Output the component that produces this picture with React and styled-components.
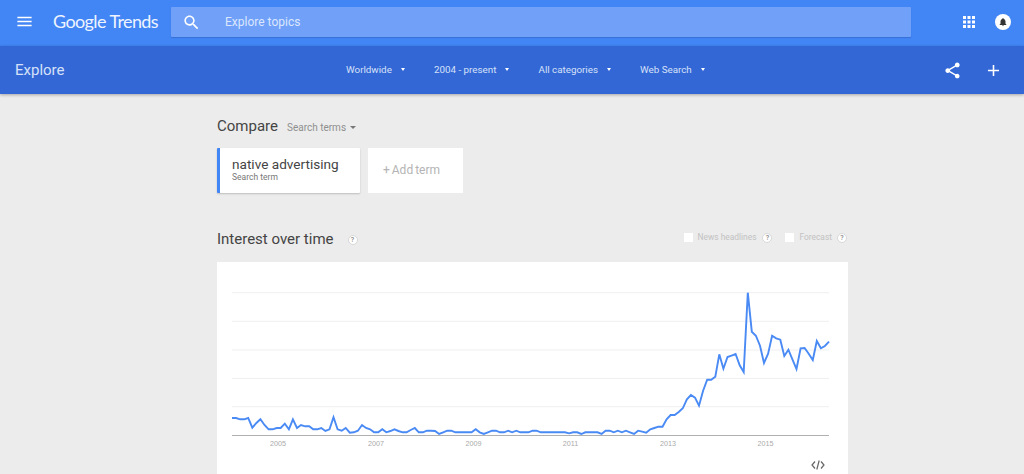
import React from "react"
import styled, { createGlobalStyle } from "styled-components"

const GlobalStyle = createGlobalStyle`
  html, body {
    margin: 0;
    background: #ececec;
    font-family: Roboto, "Liberation Sans", sans-serif;
    overflow: hidden;
  }
`

const TopBar = styled.header`
  display: flex;
  align-items: center;
  height: 46px;
  background: #4285f4;
  color: #fff;
`

const MenuButton = styled.div`
  display: flex;
  justify-content: center;
  width: 19px;
  margin: -3px 19px 0 15px;
`

const Logo = styled.div`
  width: 118px;
  margin-top: -5px;
  font-family: Lato, sans-serif;
  font-size: 18px;
  letter-spacing: -0.6px;
  white-space: nowrap;
  color: #eef4ff;
`

const SearchBar = styled.div`
  display: flex;
  align-items: center;
  box-sizing: border-box;
  width: 740px;
  height: 30px;
  margin-top: -2px;
  padding-left: 11px;
  background: #70a0f8;
  border-radius: 1px;
  box-shadow: 0 1px 1px rgba(30, 60, 140, 0.3);
  color: #fff;
`

const SearchText = styled.span`
  margin: -1px 0 0 24px;
  font-size: 12px;
  color: #dbe7fd;
`

const TopIcons = styled.div`
  display: flex;
  align-items: center;
  margin-left: 49px;
  margin-top: -3px;
`

const Avatar = styled.div`
  display: flex;
  align-items: center;
  justify-content: center;
  width: 16px;
  height: 16px;
  margin-left: 17px;
  border-radius: 50%;
  background: #fff;
  color: #333;
`

const SubBar = styled.div`
  display: flex;
  align-items: center;
  height: 48px;
  padding: 0 15px;
  background: #3367d6;
  box-shadow: 0 1px 3px rgba(0, 0, 0, 0.3);
  color: #fff;
  position: relative;
`

const PageTitle = styled.div`
  flex: 0 0 331px;
  font-size: 15px;
  color: #d6e1f8;
`

const Filters = styled.nav`
  display: flex;
  flex: 1;
  margin-top: -2px;
`

const Filter = styled.div`
  display: flex;
  align-items: center;
  width: ${(p) => p.$width}px;
  font-size: 9.8px;
  color: #d6e1f8;
`

const Caret = styled.span`
  width: 0;
  height: 0;
  margin-left: ${(p) => p.$gap || 9}px;
  border-left: ${(p) => p.$size || 2.5}px solid transparent;
  border-right: ${(p) => p.$size || 2.5}px solid transparent;
  border-top: ${(p) => p.$size || 3}px solid ${(p) => p.$color || "#fff"};
`

const SubActions = styled.div`
  display: flex;
  align-items: center;
  gap: 22px;
  margin-right: 6px;
`

const Main = styled.main`
  width: 631px;
  margin-left: 217px;
`

const CompareRow = styled.div`
  display: flex;
  align-items: center;
  height: 24px;
  margin-top: 20px;
`

const SectionTitle = styled.h2`
  margin: 0;
  font-size: 15px;
  font-weight: 400;
  color: #444;
`

const CompareMode = styled.span`
  display: flex;
  align-items: center;
  margin-left: 9px;
  margin-top: 2px;
  font-size: 10px;
  color: #8f8f8f;
`

const Terms = styled.div`
  display: flex;
  gap: 8px;
  margin-top: 10px;
`

const TermCard = styled.div`
  box-sizing: border-box;
  width: 143px;
  height: 45px;
  padding: 8px 0 0 12px;
  background: #fff;
  border-left: 3px solid #4285f4;
  border-radius: 1px;
  box-shadow: 0 1px 2px rgba(0, 0, 0, 0.2);
`

const TermName = styled.div`
  font-size: 13.6px;
  line-height: 16px;
  color: #444;
`

const TermType = styled.div`
  font-size: 8.5px;
  line-height: 10px;
  color: #777;
`

const AddTerm = styled.div`
  display: flex;
  align-items: center;
  box-sizing: border-box;
  width: 95px;
  height: 45px;
  padding: 0 0 1px 15px;
  background: #fff;
  font-size: 12px;
  word-spacing: -1px;
  color: #b4b4b4;
`

const InterestRow = styled.div`
  display: flex;
  align-items: center;
  height: 24px;
  margin-top: 34px;
`

const Help = styled.span`
  display: flex;
  align-items: center;
  justify-content: center;
  box-sizing: border-box;
  width: 10px;
  height: 10px;
  margin-left: ${(p) => p.$gap}px;
  margin-top: 1px;
  border-radius: 50%;
  background: #fff;
  border: 1px solid #d8d8d8;
  font-size: 7px;
  font-weight: 500;
  color: #888;
`

const Options = styled.div`
  display: flex;
  align-items: center;
  margin: -4px 1px 0 auto;
`

const Checkbox = styled.span`
  width: 9px;
  height: 9px;
  margin-left: ${(p) => p.$gap}px;
  margin-right: 5px;
  background: #fff;
`

const OptionLabel = styled.span`
  font-size: 8.4px;
  color: #c2c2c2;
`

const ChartCard = styled.section`
  position: relative;
  height: 212px;
  margin-top: 11px;
  background: #fff;
`

const EmbedIcon = styled.div`
  position: absolute;
  right: 23px;
  bottom: 4px;
  color: #666;
  line-height: 0;
`

const Icon = ({ d, size = 19 }) => (
  <svg width={size} height={size} viewBox="0 0 24 24" fill="currentColor">
    <path d={d} />
  </svg>
)

const ICONS = {
  menu: "M3 18h18v-2H3v2zm0-5h18v-2H3v2zm0-7v2h18V6H3z",
  search:
    "M15.5 14h-.79l-.28-.27C15.41 12.59 16 11.11 16 9.5 16 5.91 13.09 3 9.5 3S3 5.91 3 9.5 5.91 16 9.5 16c1.61 0 3.09-.59 4.23-1.57l.27.28v.79l5 4.99L20.49 19l-4.99-5zm-6 0C7.01 14 5 11.99 5 9.5S7.01 5 9.5 5 14 7.01 14 9.5 11.99 14 9.5 14z",
  apps: "M4 8h4V4H4v4zm6 12h4v-4h-4v4zm-6 0h4v-4H4v4zm0-6h4v-4H4v4zm6 0h4v-4h-4v4zm6-10v4h4V4h-4zm-6 4h4V4h-4v4zm6 6h4v-4h-4v4zm0 6h4v-4h-4v4z",
  bell: "M12 22c1.1 0 2-.9 2-2h-4c0 1.1.89 2 2 2zm6-6v-5c0-3.07-1.64-5.64-4.5-6.32V4c0-.83-.67-1.5-1.5-1.5s-1.5.67-1.5 1.5v.68C7.63 5.36 6 7.92 6 11v5l-2 2v1h16v-1l-2-2z",
  share:
    "M18 16.08c-.76 0-1.44.3-1.96.77L8.91 12.7c.05-.23.09-.46.09-.7s-.04-.47-.09-.7l7.05-4.11c.54.5 1.25.81 2.04.81 1.66 0 3-1.34 3-3s-1.34-3-3-3-3 1.34-3 3c0 .24.04.47.09.7L8.04 9.81C7.5 9.31 6.79 9 6 9c-1.66 0-3 1.34-3 3s1.34 3 3 3c.79 0 1.5-.31 2.04-.81l7.12 4.16c-.05.21-.08.43-.08.65 0 1.61 1.31 2.92 2.92 2.92 1.61 0 2.92-1.31 2.92-2.92s-1.31-2.92-2.92-2.92z",
  add: "M19 13h-6v6h-2v-6H5v-2h6V5h2v6h6v2z",
}

const FILTERS = [
  { label: "Worldwide", width: 88 },
  { label: "2004 - present", width: 104.5 },
  { label: "All categories", width: 101.5 },
  { label: "Web Search", width: 90 },
]

// monthly values, read off the reference in page pixels
const TREND = [
  418, 418, 419.3, 419.3, 418, 427.7, 423, 419.3, 425, 429.3, 429.3, 428, 428,
  423.7, 429.3, 419.3, 428, 425, 426.3, 426.3, 429.3, 429.3, 428, 431, 429.3,
  417.3, 429.3, 430.7, 428, 432.7, 432.3, 430.7, 425, 428, 429.3, 432.3, 432.3,
  429.3, 432.3, 431, 429.3, 431, 432.3, 432.3, 430, 428, 432.3, 432.3, 430.7,
  430.7, 431, 434,
  432.3, 430.7, 430.7, 432.3, 432.3, 432.3, 432.3, 432.3, 429.3, 432.3, 434,
  432.3, 430.7, 430.7, 432.3, 432.3, 430.7, 432.3, 430.7, 432.3, 432.3, 432.3,
  430.7, 430.7, 432.3, 432.3, 432.3, 432.3, 432.3, 432.3, 432.3, 433.3, 432.3,
  432.3, 434, 432.3, 432.3, 432.3, 432.3, 434, 430.7, 430.7, 432.3, 430.7,
  432.3, 430.7, 432.3, 434, 430.7,
  431.7, 432.7, 429.3, 428, 426.7, 426.7, 419.3, 415, 415, 412, 408.3, 399.3,
  395, 397.7, 405.7, 390.7, 379.7, 379.7, 376.7, 354.3, 368.7, 357, 355.7, 354,
  365.3, 372, 292.7, 331.7, 335.7, 345.7, 363, 353.7, 335.7, 338.3, 339.7, 356,
  349.7, 359.3, 369, 348.3, 348, 353.7, 360, 341, 348.3, 346, 341.7,
]

const CHART_LEFT = 232
const CHART_RIGHT = 829
const GRID = [292.7, 321.3, 350, 378.4, 406.7]
const YEARS = [
  ["2005", 278],
  ["2007", 376],
  ["2009", 473.5],
  ["2011", 570.5],
  ["2013", 668],
  ["2015", 765.5],
]

function TrendChart() {
  const step = (CHART_RIGHT - CHART_LEFT) / (TREND.length - 1)
  const points = TREND.map((y, i) => `${(CHART_LEFT + i * step).toFixed(1)},${y}`).join(" ")

  return (
    <svg width="631" height="190" viewBox="217 262 631 190" style={{ display: "block" }}>
      {GRID.map((y) => (
        <line key={y} x1={CHART_LEFT} x2={CHART_RIGHT} y1={y} y2={y} stroke="#efefef" strokeWidth="1" />
      ))}
      <line x1={CHART_LEFT} x2={CHART_RIGHT} y1="435.5" y2="435.5" stroke="#b0b0b0" strokeWidth="1" />
      <polyline points={points} fill="none" stroke="#4a8af4" strokeWidth="1.9" strokeLinejoin="miter" />
      {YEARS.map(([label, x]) => (
        <text key={label} x={x} y="446" textAnchor="middle" fontSize="7.2" fill="#aaa" fontFamily="'Liberation Sans', sans-serif">
          {label}
        </text>
      ))}
    </svg>
  )
}

export default function App() {
  return (
    <>
      <GlobalStyle />
      <TopBar>
        <MenuButton>
          <Icon d={ICONS.menu} />
        </MenuButton>
        <Logo>Google Trends</Logo>
        <SearchBar>
          <Icon d={ICONS.search} />
          <SearchText>Explore topics</SearchText>
        </SearchBar>
        <TopIcons>
          <Icon d={ICONS.apps} size={18} />
          <Avatar>
            <Icon d={ICONS.bell} size={10} />
          </Avatar>
        </TopIcons>
      </TopBar>
      <SubBar>
        <PageTitle>Explore</PageTitle>
        <Filters>
          {FILTERS.map((f) => (
            <Filter key={f.label} $width={f.width}>
              {f.label}
              <Caret />
            </Filter>
          ))}
        </Filters>
        <SubActions>
          <Icon d={ICONS.share} />
          <Icon d={ICONS.add} />
        </SubActions>
      </SubBar>
      <Main>
        <CompareRow>
          <SectionTitle>Compare</SectionTitle>
          <CompareMode>
            Search terms
            <Caret $gap={4} $size={3} $color="#777" />
          </CompareMode>
        </CompareRow>
        <Terms>
          <TermCard>
            <TermName>native advertising</TermName>
            <TermType>Search term</TermType>
          </TermCard>
          <AddTerm>+ Add term</AddTerm>
        </Terms>
        <InterestRow>
          <SectionTitle>Interest over time</SectionTitle>
          <Help $gap={14}>?</Help>
          <Options>
            <Checkbox $gap={0} />
            <OptionLabel>News headlines</OptionLabel>
            <Help $gap={6}>?</Help>
            <Checkbox $gap={13} />
            <OptionLabel>Forecast</OptionLabel>
            <Help $gap={5}>?</Help>
          </Options>
        </InterestRow>
        <ChartCard>
          <TrendChart />
          <EmbedIcon>
            <svg width="14" height="10" viewBox="0 0 14 10" fill="none" stroke="currentColor" strokeWidth="1.2">
              <path d="M4 1.5 L1 5 L4 8.5 M10 1.5 L13 5 L10 8.5 M8.2 0.5 L5.8 9.5" />
            </svg>
          </EmbedIcon>
        </ChartCard>
      </Main>
    </>
  )
}
